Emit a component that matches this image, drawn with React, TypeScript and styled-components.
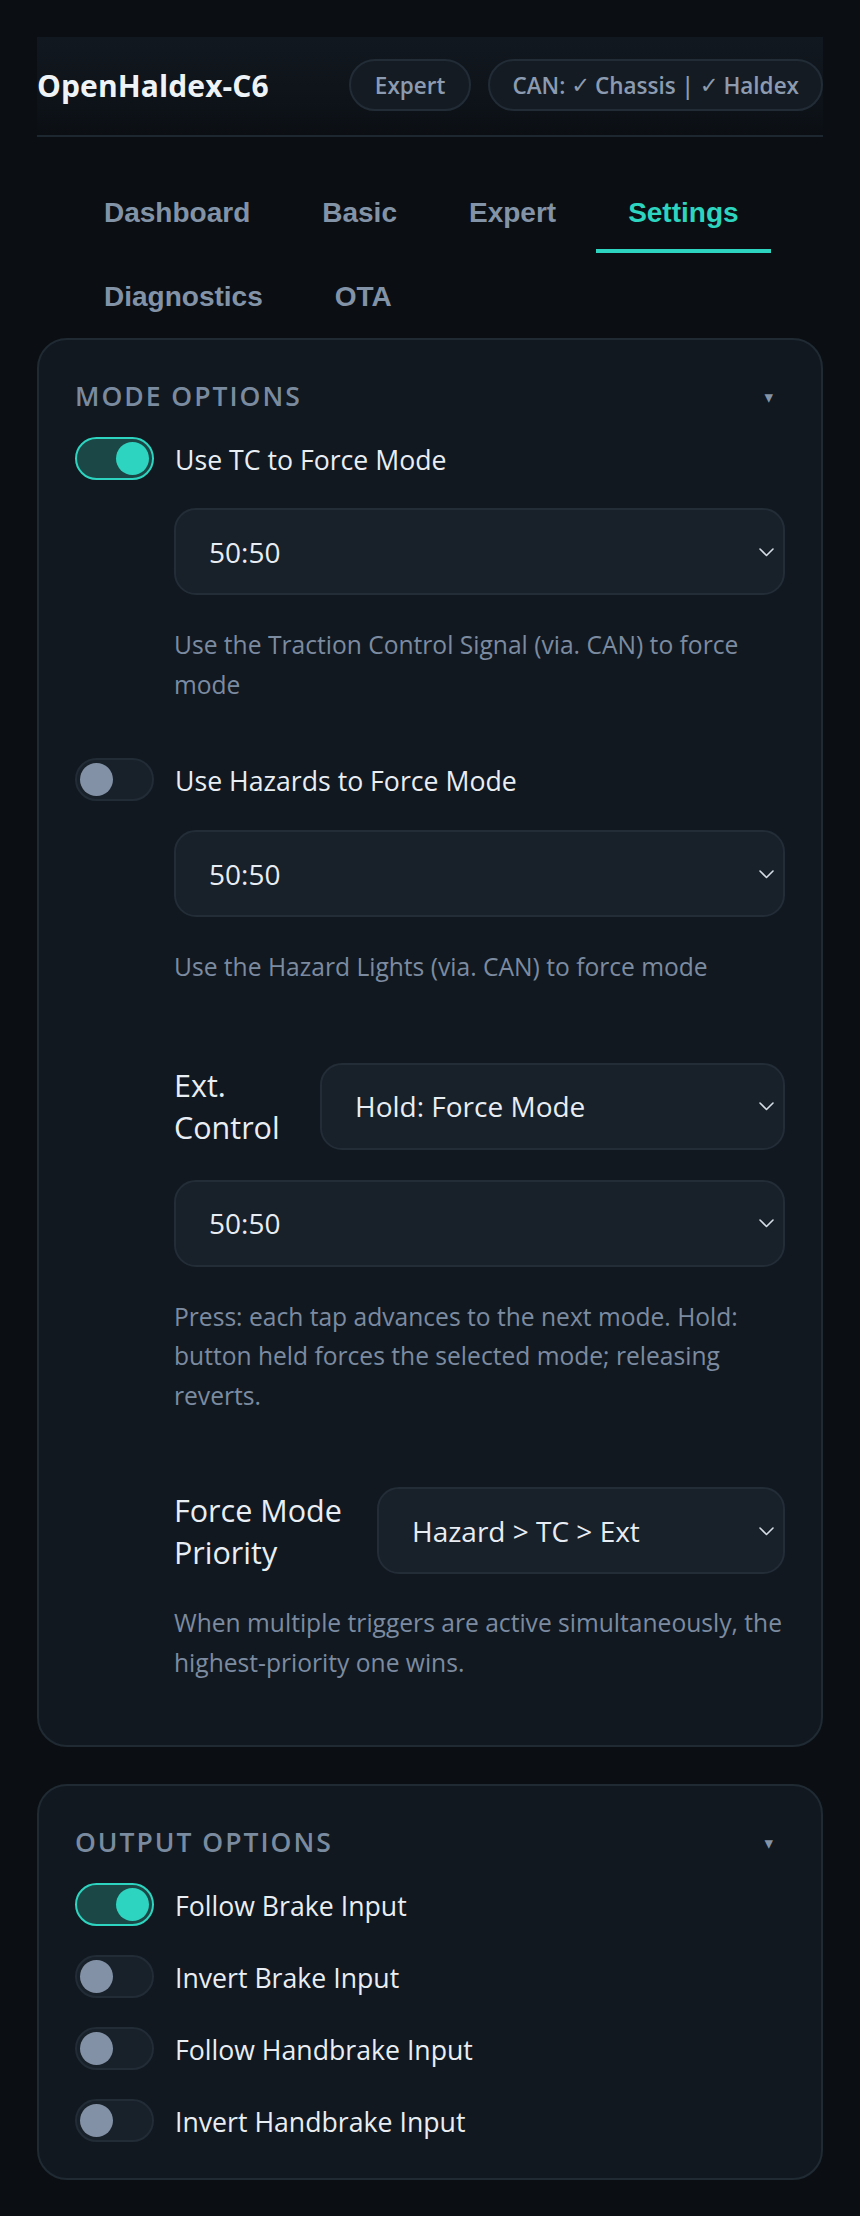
import React, { useState } from "react";
import styled, { createGlobalStyle } from "styled-components";

const GlobalStyle = createGlobalStyle`
  html, body { margin: 0; padding: 0; background: #0b0f14; }
  body { font-family: "Open Sans", "Noto Sans", "DejaVu Sans", sans-serif; color: #e6edf3; }
  *, *::before, *::after { box-sizing: border-box; }
`;

const Page = styled.div`
  padding: 37px 37px 38px;
  display: flex;
  flex-direction: column;
`;

const Header = styled.header`
  display: flex;
  align-items: center;
  justify-content: space-between;
  height: 100px;
  padding-bottom: 2px;
  border-bottom: 2px solid #1d272f;
  background: linear-gradient(180deg, rgba(20, 27, 35, 0.75) 0%, rgba(16, 22, 29, 0.5) 70%, rgba(11, 15, 20, 0) 100%);
`;

const Title = styled.h1`
  margin: 0;
  font-size: 30px;
  font-weight: 700;
  color: #eef3f8;
  letter-spacing: 0.1px;
`;

const Pills = styled.div`
  display: flex;
  gap: 17px;
`;

const Pill = styled.span<{ $pad?: number }>`
  height: 52px;
  padding: 0 ${(p) => p.$pad ?? 24}px;
  display: inline-flex;
  align-items: center;
  border-radius: 26px;
  border: 2px solid #222c36;
  background: #141b23;
  color: #8c9bb0;
  font-size: 22.5px;
  font-weight: 600;
  white-space: pre;
`;

const Check = styled.span`
  font-family: "DejaVu Sans", sans-serif;
  font-weight: 400;
  font-size: 1em;
  letter-spacing: -1px;
`;

const Tabs = styled.nav`
  display: flex;
  flex-wrap: wrap;
  gap: 6px 8px;
  padding: 0 35px;
  margin-top: 38px;
`;

const Tab = styled.button<{ $active?: boolean }>`
  font-family: "Liberation Sans", Arial, sans-serif;
  font-size: 28px;
  font-weight: 700;
  line-height: 34px;
  padding: 21px 32px 19px;
  background: none;
  border: none;
  border-bottom: 4px solid ${(p) => (p.$active ? "#2dd4bf" : "transparent")};
  color: ${(p) => (p.$active ? "#2dd4bf" : "#8393a7")};
  cursor: pointer;
`;

const Cards = styled.div`
  display: flex;
  flex-direction: column;
  gap: 37px;
  margin-top: 1px;
`;

const Card = styled.section`
  background: #111820;
  border: 2px solid #202a33;
  border-radius: 30px;
  padding: 39px 36px 36px;
  display: flex;
  flex-direction: column;
`;

const CardHead = styled.div`
  display: flex;
  align-items: center;
  justify-content: space-between;
  padding-right: 12px;
  margin-bottom: 23px;
`;

const CardTitle = styled.h2`
  margin: 0;
  font-size: 26.5px;
  line-height: 35px;
  font-weight: 600;
  letter-spacing: 2px;
  text-transform: uppercase;
  color: #7b8b9f;
`;

const Caret = styled.span`
  font-size: 17px;
  color: #8494a8;
  line-height: 1;
`;

const Sections = styled.div`
  display: flex;
  flex-direction: column;
  gap: 27px;
`;

const Section = styled.div`
  display: flex;
  flex-direction: column;
  padding-bottom: 27px;
`;

const ToggleList = styled.div`
  display: flex;
  flex-direction: column;
  gap: 29px;
`;

const ToggleRow = styled.label`
  display: flex;
  align-items: center;
  gap: 21px;
  min-height: 43px;
  font-size: 26.67px;
  line-height: 36px;
  color: #e9eef4;
  cursor: pointer;
`;

const ToggleText = styled.span`
  padding-top: 2px;
`;

const Track = styled.span<{ $on: boolean }>`
  position: relative;
  flex: none;
  width: 79px;
  height: 43px;
  border-radius: 22px;
  border: 2px solid ${(p) => (p.$on ? "#2dd4bf" : "#222c36")};
  background: ${(p) => (p.$on ? "#1b4847" : "#18202a")};
`;

const Knob = styled.span<{ $on: boolean }>`
  position: absolute;
  top: 3px;
  left: ${(p) => (p.$on ? "39px" : "3px")};
  width: 33px;
  height: 33px;
  border-radius: 50%;
  background: ${(p) => (p.$on ? "#2dd4bf" : "#8291a5")};
`;

const Indented = styled.div<{ $gap?: number }>`
  margin-left: 99px;
  margin-top: ${(p) => p.$gap ?? 0}px;
`;

const FieldRow = styled.div<{ $top?: number }>`
  display: flex;
  align-items: center;
  gap: 24px;
  margin-left: 99px;
  margin-top: ${(p) => p.$top ?? 22}px;
`;

const FieldLabel = styled.span<{ $w: number }>`
  flex: none;
  width: ${(p) => p.$w}px;
  font-size: 30.5px;
  line-height: 42px;
  color: #e9eef4;
`;

const SelectWrap = styled.div`
  position: relative;
  flex: 1;
`;

const Select = styled.select`
  appearance: none;
  -webkit-appearance: none;
  width: 100%;
  height: 87px;
  padding: 0 40px 0 33px;
  border-radius: 22px;
  border: 2px solid #232d37;
  background: #18202a;
  color: #e8edf3;
  font-family: "Open Sans", "Noto Sans", sans-serif;
  font-size: 28px;
  outline: none;
`;

const Chevron = styled.svg`
  position: absolute;
  right: 10px;
  top: 50%;
  width: 17px;
  height: 10px;
  margin-top: -5px;
  pointer-events: none;
`;

const Desc = styled.p<{ $gap?: number }>`
  margin: ${(p) => p.$gap ?? 30}px 0 0 99px;
  font-size: 24.6px;
  line-height: 39.5px;
  color: #7c8ba0;
`;

function Dropdown({ value, options }: { value: string; options: string[] }) {
  return (
    <SelectWrap>
      <Select defaultValue={value}>
        {options.map((o) => (
          <option key={o}>{o}</option>
        ))}
      </Select>
      <Chevron viewBox="0 0 17 10" fill="none">
        <path d="M2 2 L8.5 8.5 L15 2" stroke="#d5dce4" strokeWidth="1.6" strokeLinecap="round" strokeLinejoin="round" />
      </Chevron>
    </SelectWrap>
  );
}

function Toggle({ label, initial }: { label: string; initial: boolean }) {
  const [on, setOn] = useState(initial);
  return (
    <ToggleRow onClick={() => setOn(!on)}>
      <Track $on={on}>
        <Knob $on={on} />
      </Track>
      <ToggleText>{label}</ToggleText>
    </ToggleRow>
  );
}

const modes = ["50:50", "60:40", "75:25", "90:10", "Stock"];

export default function App() {
  const [tab, setTab] = useState("Settings");
  const tabs = ["Dashboard", "Basic", "Expert", "Settings", "Diagnostics", "OTA"];
  return (
    <>
      <GlobalStyle />
      <Page>
        <Header>
          <Title>OpenHaldex-C6</Title>
          <Pills>
            <Pill>Expert</Pill>
            <Pill $pad={22}>
              {"CAN: "}
              <Check>✓</Check>
              {" Chassis | "}
              <Check>✓</Check>
              {" Haldex"}
            </Pill>
          </Pills>
        </Header>
        <Tabs>
          {tabs.map((t) => (
            <Tab key={t} $active={t === tab} onClick={() => setTab(t)}>
              {t}
            </Tab>
          ))}
        </Tabs>
        <Cards>
          <Card>
            <CardHead>
              <CardTitle>Mode Options</CardTitle>
              <Caret>▾</Caret>
            </CardHead>
            <Sections>
              <Section>
                <Toggle label="Use TC to Force Mode" initial={true} />
                <Indented $gap={28}>
                  <Dropdown value="50:50" options={modes} />
                </Indented>
                <Desc>Use the Traction Control Signal (via. CAN) to force mode</Desc>
              </Section>
              <Section>
                <Toggle label="Use Hazards to Force Mode" initial={false} />
                <Indented $gap={29}>
                  <Dropdown value="50:50" options={modes} />
                </Indented>
                <Desc>Use the Hazard Lights (via. CAN) to force mode</Desc>
              </Section>
              <Section>
                <FieldRow>
                  <FieldLabel $w={122}>Ext. Control</FieldLabel>
                  <Dropdown value="Hold: Force Mode" options={["Hold: Force Mode", "Press: Cycle Modes", "Disabled"]} />
                </FieldRow>
                <Indented $gap={30}>
                  <Dropdown value="50:50" options={modes} />
                </Indented>
                <Desc>
                  Press: each tap advances to the next mode. Hold: button held forces the selected mode; releasing
                  reverts.
                </Desc>
              </Section>
              <Section>
                <FieldRow $top={18}>
                  <FieldLabel $w={179}>Force Mode Priority</FieldLabel>
                  <Dropdown value="Hazard > TC > Ext" options={["Hazard > TC > Ext", "TC > Hazard > Ext", "Ext > TC > Hazard"]} />
                </FieldRow>
                <Desc $gap={29}>When multiple triggers are active simultaneously, the highest-priority one wins.</Desc>
              </Section>
            </Sections>
          </Card>
          <Card>
            <CardHead>
              <CardTitle>Output Options</CardTitle>
              <Caret>▾</Caret>
            </CardHead>
            <ToggleList>
              <Toggle label="Follow Brake Input" initial={true} />
              <Toggle label="Invert Brake Input" initial={false} />
              <Toggle label="Follow Handbrake Input" initial={false} />
              <Toggle label="Invert Handbrake Input" initial={false} />
            </ToggleList>
          </Card>
        </Cards>
      </Page>
    </>
  );
}
